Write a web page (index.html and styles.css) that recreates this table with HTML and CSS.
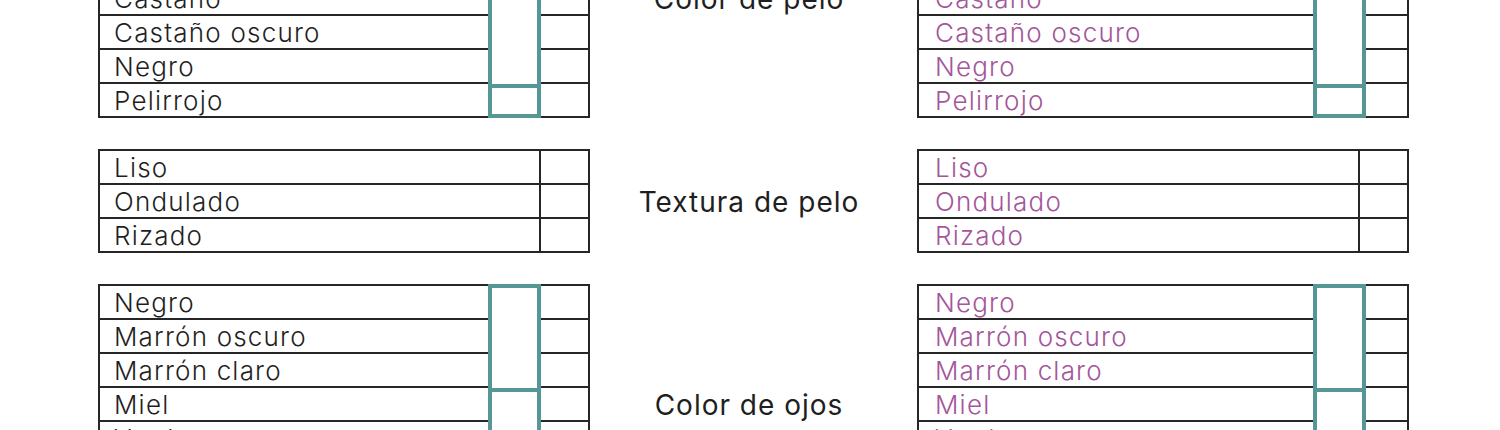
FILE: index.html
```html
<!DOCTYPE html>
<html lang="es">
<head>
<meta charset="utf-8">
<title>Rasgos físicos</title>
<link rel="stylesheet" href="styles.css">
</head>
<body>
<main class="sheet">
  <!-- Color de pelo -->
  <div class="tbl left">
    <div class="lbl">Rubio claro</div><div class="grp span6 open"></div><div class="chk"></div>
    <div class="lbl">Rubio</div><div class="chk"></div>
    <div class="lbl">Castaño claro</div><div class="chk"></div>
    <div class="lbl">Castaño</div><div class="chk"></div>
    <div class="lbl">Castaño oscuro</div><div class="chk"></div>
    <div class="lbl">Negro</div><div class="chk"></div>
    <div class="lbl">Pelirrojo</div><div class="grp span1 next"></div><div class="chk"></div>
  </div>
  <div class="topic">Color de pelo</div>
  <div class="tbl right pink">
    <div class="lbl">Rubio claro</div><div class="grp span6 open"></div><div class="chk"></div>
    <div class="lbl">Rubio</div><div class="chk"></div>
    <div class="lbl">Castaño claro</div><div class="chk"></div>
    <div class="lbl">Castaño</div><div class="chk"></div>
    <div class="lbl">Castaño oscuro</div><div class="chk"></div>
    <div class="lbl">Negro</div><div class="chk"></div>
    <div class="lbl">Pelirrojo</div><div class="grp span1 next"></div><div class="chk"></div>
  </div>

  <!-- Textura de pelo -->
  <div class="tbl plain left">
    <div class="lbl">Liso</div><div class="chk"></div>
    <div class="lbl">Ondulado</div><div class="chk"></div>
    <div class="lbl">Rizado</div><div class="chk"></div>
  </div>
  <div class="topic">Textura de pelo</div>
  <div class="tbl plain right pink">
    <div class="lbl">Liso</div><div class="chk"></div>
    <div class="lbl">Ondulado</div><div class="chk"></div>
    <div class="lbl">Rizado</div><div class="chk"></div>
  </div>

  <!-- Color de ojos -->
  <div class="tbl left">
    <div class="lbl">Negro</div><div class="grp span3 open"></div><div class="chk"></div>
    <div class="lbl">Marrón oscuro</div><div class="chk"></div>
    <div class="lbl">Marrón claro</div><div class="chk"></div>
    <div class="lbl">Miel</div><div class="grp span4 next"></div><div class="chk"></div>
    <div class="lbl">Verde</div><div class="chk"></div>
    <div class="lbl">Azul</div><div class="chk"></div>
    <div class="lbl">Gris</div><div class="chk"></div>
  </div>
  <div class="topic">Color de ojos</div>
  <div class="tbl right pink">
    <div class="lbl">Negro</div><div class="grp span3 open"></div><div class="chk"></div>
    <div class="lbl">Marrón oscuro</div><div class="chk"></div>
    <div class="lbl">Marrón claro</div><div class="chk"></div>
    <div class="lbl">Miel</div><div class="grp span4 next"></div><div class="chk"></div>
    <div class="lbl">Verde</div><div class="chk"></div>
    <div class="lbl">Azul</div><div class="chk"></div>
    <div class="lbl">Gris</div><div class="chk"></div>
  </div>
</main>
</body>
</html>
```

FILE: styles.css
```css
html, body {
  margin: 0;
  padding: 0;
  background: #ffffff;
}

body {
  font-family: "Inter", "Lato", "Noto Sans", "Liberation Sans", sans-serif;
  color: #1f1f1f;
  overflow: hidden;
}

.sheet {
  display: grid;
  grid-template-columns: 492px 327px 492px;
  row-gap: 31px;
  padding-left: 98px;
  margin-top: -122px;
}

.tbl {
  display: grid;
  grid-auto-rows: 34px;
  border: 2px solid #262626;
  border-bottom: none;
  box-sizing: border-box;
  width: 492px;
}

.tbl.left {
  grid-template-columns: 388px 53px 47px;
}

.tbl.right {
  grid-template-columns: 394px 53px 41px;
}

.tbl.plain.left,
.tbl.plain.right {
  grid-template-columns: 439px 49px;
}

.lbl {
  grid-column: 1;
  border-bottom: 2px solid #262626;
  font-size: 26px;
  font-weight: 300;
  line-height: 30px;
  padding-top: 2px;
  padding-left: 14px;
  letter-spacing: 1.2px;
  white-space: nowrap;
}

.right .lbl {
  padding-left: 16px;
}

.pink .lbl {
  color: #a4569a;
}

.chk {
  grid-column: 3;
  border-bottom: 2px solid #262626;
}

.plain .chk {
  grid-column: 2;
  border-left: 2px solid #262626;
}

.grp {
  grid-column: 2;
  border: 4px solid #549795;
  margin-top: -2px;
}

.grp.open {
  border-bottom: none;
}

.grp.next {
  margin-top: 0;
}

.span1 { grid-row: span 1; }
.span3 { grid-row: span 3; }
.span4 { grid-row: span 4; }
.span6 { grid-row: span 6; }

.topic {
  align-self: center;
  text-align: center;
  padding-top: 2px;
  padding-right: 9px;
  font-size: 28px;
  font-weight: 400;
  letter-spacing: 1px;
  color: #1f1f1f;
  white-space: nowrap;
}
```
